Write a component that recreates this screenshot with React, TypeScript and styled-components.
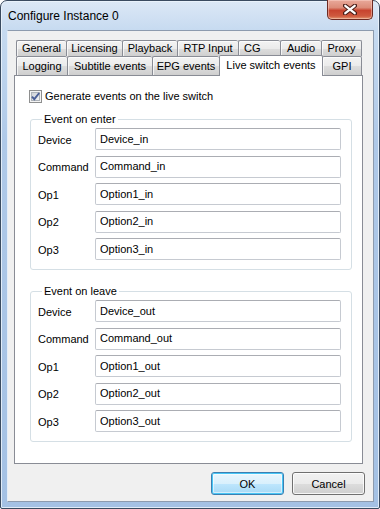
import React from "react";
import styled, { createGlobalStyle } from "styled-components";

const GlobalStyle = createGlobalStyle`
  html, body {
    margin: 0;
    padding: 0;
    background: #ffffff;
  }
  * {
    box-sizing: border-box;
  }
`;

const Window = styled.div`
  width: 380px;
  height: 509px;
  display: flex;
  flex-direction: column;
  padding: 0 5px 6px 6px;

  border: 1px solid #3a4b60;
  border-radius: 7px 7px 2px 2px;
  background: linear-gradient(to bottom, #dce8f6 0px, #c6daf0 30px, #afc9e8 140px, #a4c1e4 100%);
  box-shadow: inset 0 0 0 1px rgba(235, 243, 252, 0.85);

  font-family: "Liberation Sans", Arial, sans-serif;
  font-size: 11px;
  color: #000;
`;

const TitleBar = styled.div`
  height: 29px;
  flex-shrink: 0;
  display: flex;
  align-items: flex-start;
  justify-content: space-between;
`;

const Title = styled.span`
  align-self: center;
  margin-left: 1px;
  font-size: 12px;
  color: #000;
`;

const CloseButton = styled.div`
  width: 46px;
  height: 20px;
  margin-top: -1px;
  margin-right: 1px;
  display: flex;
  align-items: center;
  justify-content: center;

  border: 1px solid #6d2a22;
  border-top: none;
  border-radius: 0 0 5px 5px;
  background: linear-gradient(to bottom, #e9a99a 0%, #dc8c79 40%, #c8442f 55%, #cf5a3f 85%, #e39a72 100%);
  box-shadow: inset 0 0 0 1px rgba(255, 220, 210, 0.45);
`;

const Client = styled.div`
  flex: 1;
  display: flex;
  flex-direction: column;
  padding: 9px 10px 6px 6px;
  background: #f0f0f0;
  border: 1px solid #8d9bae;
  border-left-color: #e4edf8;
`;

const TabStrip = styled.div`
  display: flex;
  flex-direction: column;
  padding-left: 2px;
`;

const TabRow = styled.div<{ $h: number }>`
  display: flex;
  align-items: flex-end;
  height: ${(p) => p.$h}px;
`;

interface ITabProps {
  $w: number;
  $active?: boolean;
  $closed?: boolean;
  $overlap?: boolean;
  $left?: boolean;
}

const Tab = styled.div<ITabProps>`
  position: relative;
  width: ${(p) => p.$w}px;
  height: ${(p) => (p.$active ? "calc(100% + 2px)" : "100%")};
  margin-bottom: ${(p) => (p.$active ? "-1px" : "0")};
  margin-left: ${(p) => (p.$overlap ? "-1px" : "0")};
  z-index: ${(p) => (p.$active ? 2 : 1)};
  display: flex;
  align-items: center;
  justify-content: ${(p) => (p.$left ? "flex-start" : "center")};
  padding-left: ${(p) => (p.$left ? "5px" : "0")};
  padding-bottom: ${(p) => (p.$active ? "3px" : "1px")};
  white-space: nowrap;

  border: 1px solid #898c95;
  border-right-width: ${(p) => (p.$active || p.$closed ? "1px" : "0")};
  border-bottom: none;
  border-radius: 2px 2px 0 0;
  background: ${(p) =>
    p.$active ? "#ffffff" : "linear-gradient(to bottom, #f3f3f3 0%, #ebebeb 50%, #dddddd 51%, #cfcfcf 100%)"};
  box-shadow: ${(p) => (p.$active ? "none" : "inset 1px 1px 0 rgba(255,255,255,0.7)")};
`;

const Panel = styled.div`
  flex: 1;
  display: flex;
  flex-direction: column;
  padding: 14px 10px 0 15px;
  background: #ffffff;
  border: 1px solid #898c95;
`;

const CheckRow = styled.label`
  display: flex;
  align-items: center;
  gap: 3px;
  height: 13px;
  margin-left: -1px;
  line-height: 13px;
`;

const Group = styled.fieldset<{ $gap: number }>`
  min-width: 0;
  margin: ${(p) => p.$gap}px 0 0 0;
  padding: 2px 10px 9px 7px;
  border: 1px solid #d5dfe5;
  border-radius: 3px;
`;

const Legend = styled.legend`
  margin-left: 4px;
  padding: 0 2px;
  line-height: 13px;
  color: #000;
`;

const FieldGrid = styled.div`
  display: grid;
  grid-template-columns: 57px 1fr;
  grid-auto-rows: 22px;
  row-gap: 5.5px;
  align-items: center;
`;

const Label = styled.span`
  padding-top: 1px;
`;

const TextBox = styled.input`
  width: 100%;
  height: 22px;
  padding: 0 4px 1px 4px;
  font-family: "Liberation Sans", Arial, sans-serif;
  font-size: 11px;
  color: #000;
  background: #fff;
  border: 1px solid #c6cad1;
  border-top-color: #abadb3;
  border-radius: 2px;
  outline: none;
`;

const ButtonRow = styled.div`
  display: flex;
  justify-content: flex-end;
  gap: 8px;
  margin-top: 8px;
  margin-right: -2px;
`;

const Button = styled.button<{ $default?: boolean }>`
  width: 73px;
  height: 23px;
  padding: 0;
  font-family: "Liberation Sans", Arial, sans-serif;
  font-size: 11px;
  color: #000;
  border-radius: 3px;
  border: 1px solid ${(p) => (p.$default ? "#3c7fb1" : "#707070")};
  background: ${(p) =>
    p.$default
      ? "linear-gradient(to bottom, #eaf6fd 0%, #d9f0fc 50%, #bee6fd 51%, #a7d9f5 100%)"
      : "linear-gradient(to bottom, #f2f2f2 0%, #ebebeb 50%, #dddddd 51%, #cfcfcf 100%)"};
  box-shadow: ${(p) =>
    p.$default ? "inset 0 0 0 1px #48c6f6, inset 0 0 0 2px rgba(255,255,255,0.5)" : "inset 0 0 0 1px rgba(255,255,255,0.8)"};
`;

function CheckBox() {
  return (
    <svg width="13" height="13" viewBox="0 0 13 13">
      <defs>
        <linearGradient id="cbfill" x1="0" y1="0" x2="1" y2="1">
          <stop offset="0" stopColor="#cbcfd5" />
          <stop offset="1" stopColor="#f6f6f6" />
        </linearGradient>
      </defs>
      <rect x="0.5" y="0.5" width="12" height="12" fill="#f4f4f4" stroke="#8e8f8f" />
      <rect x="2.5" y="2.5" width="8" height="8" fill="url(#cbfill)" stroke="#aeb3b9" />
      <path d="M3 6.6 L5.3 9.2 L10.2 3" fill="none" stroke="#4a5f97" strokeWidth="1.9" />
    </svg>
  );
}

function CloseGlyph() {
  return (
    <svg width="14" height="11" viewBox="0 0 14 11">
      <path d="M2 1.5 L12 9.5 M12 1.5 L2 9.5" stroke="#4a1d17" strokeWidth="4.2" strokeLinecap="round" />
      <path d="M2.3 1.8 L11.7 9.2 M11.7 1.8 L2.3 9.2" stroke="#ffffff" strokeWidth="2.3" strokeLinecap="round" />
    </svg>
  );
}

interface ITab {
  label: string;
  w: number;
  active?: boolean;
  closed?: boolean;
  overlap?: boolean;
  left?: boolean;
}

const topTabs: ITab[] = [
  { label: "General", w: 50 },
  { label: "Licensing", w: 56 },
  { label: "Playback", w: 55 },
  { label: "RTP Input", w: 61 },
  { label: "CG", w: 42, left: true },
  { label: "Audio", w: 41 },
  { label: "Proxy", w: 41, closed: true },
];

const bottomTabs: ITab[] = [
  { label: "Logging", w: 51 },
  { label: "Subtitle events", w: 85 },
  { label: "EPG events", w: 67 },
  { label: "Live switch events", w: 104, active: true },
  { label: "GPI", w: 40, closed: true, overlap: true },
];

interface IGroup {
  title: string;
  suffix: string;
  gap: number;
}

function EventGroup({ title, suffix, gap }: IGroup) {
  const fields = [
    ["Device", "Device"],
    ["Command", "Command"],
    ["Op1", "Option1"],
    ["Op2", "Option2"],
    ["Op3", "Option3"],
  ];
  return (
    <Group $gap={gap}>
      <Legend>{title}</Legend>
      <FieldGrid>
        {fields.map(([label, value]) => (
          <React.Fragment key={label}>
            <Label>{label}</Label>
            <TextBox defaultValue={`${value}_${suffix}`} />
          </React.Fragment>
        ))}
      </FieldGrid>
    </Group>
  );
}

function TabLine({ tabs, height }: { tabs: ITab[]; height: number }) {
  return (
    <TabRow $h={height}>
      {tabs.map((t) => (
        <Tab
          key={t.label}
          $w={t.w}
          $active={t.active}
          $closed={t.closed}
          $overlap={t.overlap}
          $left={t.left}
        >
          {t.label}
        </Tab>
      ))}
    </TabRow>
  );
}

export default function App() {
  return (
    <>
      <GlobalStyle />
      <Window>
        <TitleBar>
          <Title>Configure Instance 0</Title>
          <CloseButton>
            <CloseGlyph />
          </CloseButton>
        </TitleBar>
        <Client>
          <TabStrip>
            <TabLine tabs={topTabs} height={16} />
            <TabLine tabs={bottomTabs} height={19} />
          </TabStrip>
          <Panel>
            <CheckRow>
              <CheckBox />
              <span>Generate events on the live switch</span>
            </CheckRow>
            <EventGroup title="Event on enter" suffix="in" gap={10} />
            <EventGroup title="Event on leave" suffix="out" gap={15} />
          </Panel>
          <ButtonRow>
            <Button $default>OK</Button>
            <Button>Cancel</Button>
          </ButtonRow>
        </Client>
      </Window>
    </>
  );
}
